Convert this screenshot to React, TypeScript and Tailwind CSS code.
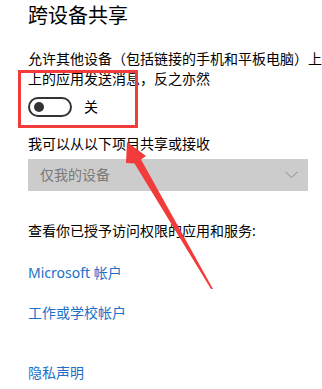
import React from 'react';

const FONT = { fontFamily: '"Noto Sans", "Noto Sans CJK SC", sans-serif' };

function Toggle({ label }: { label: string }) {
  return (
    <div className="mt-[8px] flex h-[20px] items-center gap-[12px]">
      <div className="flex h-[20px] w-[44px] items-center rounded-full border-2 border-[#333] pl-[4px]">
        <div className="h-[10px] w-[10px] rounded-full bg-[#333]" />
      </div>
      <span className="text-[14px] leading-[20px] text-black">{label}</span>
    </div>
  );
}

export default function App() {
  return (
    <div className="relative flex h-[389px] w-[322px] overflow-hidden bg-white" style={FONT}>
      <div className="ml-[1px] w-[2px] bg-[#a3a3a3]" />

      <div className="flex flex-1 flex-col pl-[27px] text-black">
        <h1 className="mt-[2px] whitespace-nowrap text-[20px] font-normal leading-[28px]">跨设备共享</h1>

        <p className="mt-[19px] whitespace-nowrap text-[14px] leading-[20px]">
          允许其他设备（包括链接的手机和平板电脑）上
          <br />
          上的应用发送消息，反之亦然
        </p>

        <Toggle label="关" />

        <p className="mt-[17px] text-[14px] leading-[20px]">我可以从以下项目共享或接收</p>

        <div className="mt-[5px] flex h-[32px] w-[280px] items-center justify-between bg-[#cccccc] pl-[12px] pr-[10px]">
          <span className="text-[14px] leading-[20px] text-[#7a7a7a]">仅我的设备</span>
          <svg width="13" height="8" viewBox="0 0 13 8" fill="none">
            <path d="M0.5 0.8 L6.5 6.8 L12.5 0.8" stroke="#8a8a8a" strokeWidth="1" />
          </svg>
        </div>

        <p className="mt-[30px] text-[14px] leading-[20px]">查看你已授予访问权限的应用和服务:</p>

        <a className="mt-[22px] text-[14px] leading-[20px] text-[#1a6fc9]">Microsoft 帐户</a>
        <a className="mt-[20px] text-[14px] leading-[20px] text-[#1a6fc9]">工作或学校帐户</a>
        <a className="mt-[40px] text-[14px] leading-[20px] text-[#1a6fc9]">隐私声明</a>
      </div>

      {/* annotation overlay */}
      <div className="pointer-events-none absolute left-[18px] top-[70px] h-[58px] w-[120px] border-[3px] border-[#f23b3b]" />
      <svg className="pointer-events-none absolute left-0 top-0" width="322" height="389" viewBox="0 0 322 389">
        <polygon
          points="127,142 146,156 141,159.5 213,289 211,289 134.5,163.5 126,163"
          fill="#f23b3b"
        />
      </svg>
    </div>
  );
}
